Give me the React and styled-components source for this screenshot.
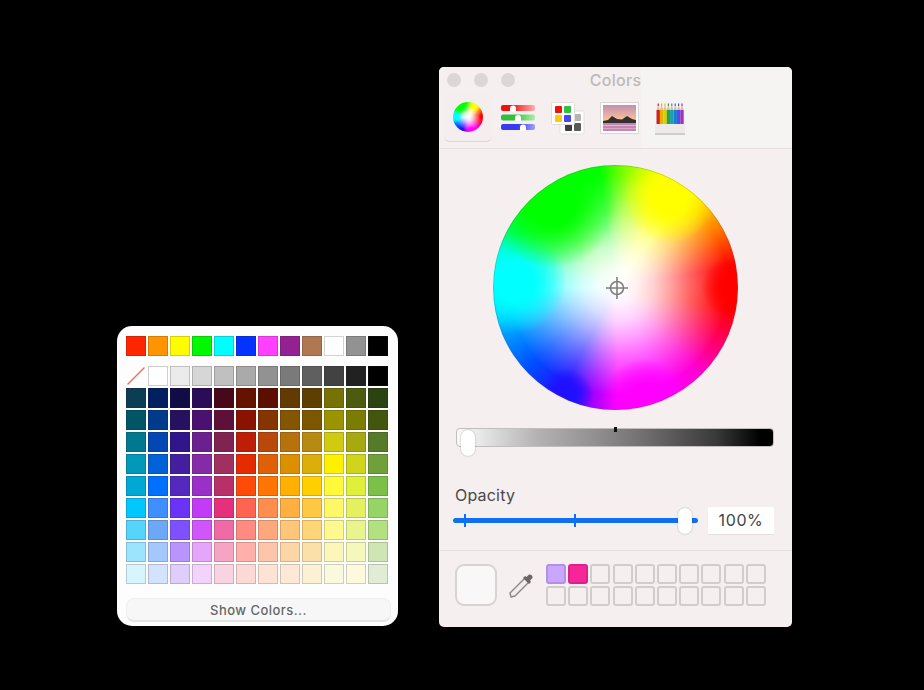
import React from 'react';
import styled, { createGlobalStyle } from 'styled-components';

const Global = createGlobalStyle`
  html, body { margin: 0; padding: 0; background: #000; }
  body { font-family: Inter, "Liberation Sans", sans-serif; }
`;

/* Hue anchors measured clockwise from the right-hand edge of the wheel */
const ANCHORS = [
  [0, '#f00'], [10, '#f00'], [28, '#ff0066'], [45, '#ff00d0'], [62, '#f0f'],
  [88, '#f0f'], [102, '#a000ff'], [117, '#2010ff'], [138, '#0050ff'], [160, '#00a8ff'],
  [180, '#0ff'], [195, '#00ffcc'], [211, '#00ff66'], [232, '#0f0'], [262, '#0f0'],
  [276, '#90ff00'], [296, '#ff0'], [306, '#ff0'], [322, '#ffb000'], [339, '#ff4000'],
  [350, '#f00'], [360, '#f00'],
];
const conic = `conic-gradient(from 90deg, ${ANCHORS.map(([d, c]) => `${c} ${d}deg`).join(', ')})`;

const lobe = (x, y, r, rgb) =>
  `radial-gradient(circle ${r} at ${x}% ${y}%, rgba(${rgb},1) 0, rgba(${rgb},1) 35%, rgba(${rgb},0) 100%)`;

const wheelGradient = ({ $scale = 245 }) => {
  const s = v => `${(v * $scale).toFixed(1)}px`;
  return [
    lobe(24, 15, s(0.27), '0,255,0'),
    lobe(9, 48, s(0.21), '0,255,255'),
    lobe(98, 50, s(0.13), '255,0,0'),
    lobe(72, 13, s(0.19), '255,255,0'),
    lobe(62, 96, s(0.17), '255,0,255'),
    lobe(30, 94, s(0.11), '32,16,255'),
    `radial-gradient(circle closest-side at 51% 49%, rgba(255,255,255,1) 0, rgba(255,255,255,.95) 15%, rgba(255,255,255,.82) 30%, rgba(255,255,255,.62) 45%, rgba(255,255,255,.4) 60%, rgba(255,255,255,.2) 75%, rgba(255,255,255,0) 92%)`,
    conic,
  ].join(', ');
};

const Desktop = styled.div`
  position: relative;
  width: 924px;
  height: 690px;
  background: #000;
  overflow: hidden;
`;

/* ---------- colour grid popover ---------- */
const Popover = styled.div`
  position: absolute;
  left: 117px;
  top: 326px;
  width: 281px;
  height: 300px;
  box-sizing: border-box;
  padding: 10px 8px 0 9px;
  background: #fdfdfd;
  border-radius: 15px;
`;
const SwatchGrid = styled.div`
  display: grid;
  grid-template-columns: repeat(12, 20px);
  grid-auto-rows: 20px;
  gap: 2px;
  margin-bottom: ${p => p.$after || 0}px;
`;
const Swatch = styled.div`
  box-sizing: border-box;
  background: ${p => p.$c};
  border: 1.5px solid rgba(40, 30, 40, ${p => p.$edge || 0.2});
`;
const NoColor = styled.svg`
  width: 20px;
  height: 20px;
  display: block;
`;
const ShowButton = styled.div`
  box-sizing: border-box;
  width: 265px;
  height: 24px;
  margin-top: 14px;
  border: 1px solid #efefef;
  border-bottom: 2px solid #e4e3e3;
  border-radius: 8px;
  background: #f8f7f7;
  color: #666;
  font-size: 13px;
  font-weight: 500;
  letter-spacing: 0.45px;
  line-height: 23px;
  text-align: center;
`;

/* ---------- Colors window ---------- */
const Win = styled.div`
  position: absolute;
  left: 439px;
  top: 67px;
  width: 353px;
  height: 560px;
  background: #f6eff0;
  border-radius: 5px;
  display: flex;
  flex-direction: column;
  overflow: hidden;
`;
const Header = styled.div`
  box-sizing: border-box;
  height: 82px;
  flex: none;
  border-bottom: 1px solid #e6e0e0;
  background: linear-gradient(90deg, #f6eff0 202px, #f6f3f3 202px);
  display: flex;
  flex-direction: column;
`;
const TitleBar = styled.div`
  position: relative;
  height: 26px;
  flex: none;
  display: flex;
  align-items: center;
  gap: 13px;
  padding-left: 8px;
`;
const Light = styled.span`
  width: 14px;
  height: 14px;
  border-radius: 50%;
  background: #dcd6d6;
`;
const Title = styled.span`
  position: absolute;
  left: 0;
  right: 0;
  text-align: center;
  color: #bdb9b9;
  font-size: 16px;
  font-weight: 500;
  letter-spacing: 0.3px;
`;
const Tabs = styled.div`
  display: flex;
  align-items: flex-start;
  padding-left: 5px;
`;
const ActiveTab = styled.div`
  box-sizing: border-box;
  width: 48px;
  height: 49px;
  border-bottom: 1px solid #dbd5d5;
  border-radius: 0 0 6px 6px;
  background: #f5eeef;
  display: flex;
  justify-content: center;
  padding-top: 9px;
`;
const MiniWheel = styled.div`
  width: 30px;
  height: 30px;
  border-radius: 50%;
  background: ${wheelGradient};
`;
const TabIcon = styled.svg`
  display: block;
  flex: none;
  margin-left: ${p => p.$ml}px;
  margin-top: ${p => p.$mt}px;
`;
const Body = styled.div`
  display: flex;
  flex-direction: column;
  padding: 16px 18px 0 17px;
`;
const Wheel = styled.div`
  position: relative;
  width: 245px;
  height: 245px;
  margin-bottom: 1px;
  border-radius: 50%;
  align-self: center;
  background: ${wheelGradient};
  box-shadow: inset 0 0 0 1px rgba(90, 90, 90, .25);
`;
const Crosshair = styled.svg`
  position: absolute;
  left: 112px;
  top: 111px;
`;
const GreySlider = styled.div`
  position: relative;
  box-sizing: border-box;
  height: 19px;
  margin-top: 17px;
  border: 1px solid #c3bebe;
  border-radius: 4px;
  background: linear-gradient(90deg, #fafafa 0, #e6e6e6 8%, #b5b3b3 25%, #8f8d8d 45%, #6a6868 62%, #3a3939 82%, #000 96%);
`;
const Tick = styled.span`
  position: absolute;
  left: 157px;
  top: -2px;
  width: 3px;
  height: 5px;
  background: #111;
`;
const Thumb = styled.span`
  position: absolute;
  left: ${p => p.$x}px;
  top: ${p => p.$y}px;
  width: 14px;
  height: 26px;
  border-radius: 7px;
  background: #fff;
  box-shadow: 0 0 2px rgba(0, 0, 0, .3);
`;
const Label = styled.div`
  margin-top: 38px;
  font-size: 16px;
  line-height: 20px;
  color: #4b4849;
  letter-spacing: 0.2px;
  margin-left: -1px;
`;
const OpacityRow = styled.div`
  display: flex;
  align-items: center;
  height: 27px;
  margin-top: 2px;
  margin-left: -3px;
`;
const BlueTrack = styled.div`
  position: relative;
  width: 245px;
  height: 5px;
  border-radius: 3px;
  background: #0f70f2;
`;
const BlueTick = styled.span`
  position: absolute;
  left: ${p => p.$x}px;
  top: -4px;
  width: 2px;
  height: 13px;
  background: #0f70f2;
`;
const ValueBox = styled.div`
  box-sizing: border-box;
  width: 66px;
  height: 27px;
  margin-left: 10px;
  background: #fff;
  color: #444;
  font-size: 16px;
  line-height: 27px;
  text-align: center;
  letter-spacing: 0.6px;
  box-shadow: 0 1px 0 #e4dede;
`;
const Footer = styled.div`
  margin-top: 16px;
  border-top: 1px solid #e6e0e0;
  padding: 13px 0 0 16px;
  display: flex;
  align-items: flex-start;
`;
const BigWell = styled.div`
  box-sizing: border-box;
  width: 42px;
  height: 42px;
  border: 2px solid #d8d3d3;
  border-radius: 9px;
  background: #f9f7f7;
`;
const Dropper = styled.svg`
  display: block;
  flex: none;
  margin: 8px 0 0 12px;
`;
const Wells = styled.div`
  display: grid;
  grid-template-columns: repeat(10, 20px);
  grid-auto-rows: 20px;
  gap: 2px 2.2px;
  margin-left: 11px;
`;
const Well = styled.div`
  box-sizing: border-box;
  border: 2px solid ${p => p.$edge || '#d2cdcd'};
  border-radius: 3px;
  background: ${p => p.$c || 'transparent'};
`;

const TOP = ['#ff2600','#ff9300','#fffb00','#00f900','#00fdff','#0433ff','#ff40ff','#942192','#b07850','#ffffff','#929292','#000000'];
const GREYS = ['#ffffff','#ebebeb','#d6d6d6','#c0c0c0','#aaaaaa','#929292','#7a7a7a','#5f5f5f','#424242','#212121','#000000'];
const ROWS = [
  ['#0b3d54','#002060','#110b46','#2b0c56','#470818','#661200','#5c0f00','#633b00','#5d3f00','#777204','#4d5b0f','#2b4310'],
  ['#005567','#003a8a','#261160','#4a1170','#5f1038','#8a1300','#853500','#855600','#7d5700','#999400','#7a7d00','#42570d'],
  ['#00788f','#0247b3','#31158a','#6c2090','#812350','#be1e08','#b8480c','#b6720c','#b78a12','#d0ca10','#a8a910','#557a28'],
  ['#0098b8','#0061d8','#431fa0','#852ba8','#a03060','#e52b00','#e06008','#dc9000','#dcae0a','#fff000','#cfd51a','#6fa03a'],
  ['#00a8d6','#0070ff','#5429c0','#9a30c8','#b83068','#ff4a08','#ff7500','#ffb000','#ffcf00','#fff93a','#dff03a','#7cc04a'],
  ['#00c8ff','#3e8fff','#6a33f5','#c23cf5','#e5307e','#ff6452','#ff8d4d','#ffb040','#ffc843','#fff766','#e5f060','#96d565'],
  ['#55d5fb','#6ca8f5','#7e50ff','#d056fa','#f06aa5','#ff8a80','#ffa87e','#ffc67a','#ffd677','#fff990','#e8f58e','#b3e080'],
  ['#9be4fd','#a5c8fc','#b994ff','#e4a5fb','#f6a4c4','#ffb0aa','#ffc5ab','#fdd6a6','#fbe1a8','#fbf7bb','#f5f8bb','#cfe6b4'],
  ['#d7f5fe','#d3e2fd','#dfcdfb','#f3d2fc','#f9d3e0','#fcd9d5','#fde3d4','#fde9d5','#fdf1d4','#fbf9dd','#fdf9dc','#e2ecd4'],
];

const SlidersIcon = () => (
  <TabIcon $ml={8} $mt={11} width="36" height="29" viewBox="0 0 36 29">
    <defs>
      <linearGradient id="sr"><stop offset="0.3" stopColor="#f01010" /><stop offset="1" stopColor="#ffb0b0" /></linearGradient>
      <linearGradient id="sg"><stop offset="0.4" stopColor="#30c040" /><stop offset="1" stopColor="#b0eca8" /></linearGradient>
      <linearGradient id="sb"><stop offset="0.5" stopColor="#3a3af0" /><stop offset="1" stopColor="#a0a0ff" /></linearGradient>
    </defs>
    <rect x="1" y="1" width="34" height="6" rx="2" fill="url(#sr)" />
    <rect x="1" y="10.5" width="34" height="6" rx="2" fill="url(#sg)" />
    <rect x="1" y="20" width="34" height="6" rx="2" fill="url(#sb)" />
    <path d="M13 1.5 a3 3 0 0 1 3 3 v3 h-6 v-3 a3 3 0 0 1 3 -3z" fill="#fff" />
    <path d="M18 11 a3 3 0 0 1 3 3 v3 h-6 v-3 a3 3 0 0 1 3 -3z" fill="#fff" />
    <path d="M23 20.5 a3 3 0 0 1 3 3 v3 h-6 v-3 a3 3 0 0 1 3 -3z" fill="#fff" />
  </TabIcon>
);
const PaletteIcon = () => (
  <TabIcon $ml={15} $mt={9} width="34" height="33" viewBox="0 0 34 33">
    <rect x="9" y="9" width="24" height="23" rx="1" fill="#fff" stroke="#e2dddd" />
    <rect x="22" y="12" width="8" height="7" rx="1" fill="#b5b3b3" />
    <rect x="14" y="22" width="7" height="7" rx="1" fill="#3f3d3e" />
    <rect x="23" y="21" width="7" height="8" rx="1" fill="#5a5859" />
    <rect x="0.5" y="0.5" width="23" height="22" rx="1" fill="#fff" stroke="#e2dddd" />
    <rect x="4" y="4" width="7" height="7" rx="1" fill="#f01008" />
    <rect x="13" y="4" width="7" height="7" rx="1" fill="#30c040" />
    <rect x="4" y="13" width="7" height="7" rx="1" fill="#ffc800" />
    <rect x="13" y="13" width="7" height="7" rx="1" fill="#4848f0" />
  </TabIcon>
);
const PhotoIcon = () => (
  <TabIcon $ml={15} $mt={9} width="39" height="32" viewBox="0 0 39 32">
    <defs>
      <linearGradient id="sky" x1="0" y1="0" x2="0" y2="1">
        <stop offset="0" stopColor="#c090b0" /><stop offset="0.3" stopColor="#e0a8a8" /><stop offset="0.55" stopColor="#f8c090" /><stop offset="1" stopColor="#f4c8a0" />
      </linearGradient>
    </defs>
    <rect x="0.5" y="0.5" width="38" height="31" fill="#fff" stroke="#dcd7d7" />
    <rect x="3" y="3" width="33" height="26" fill="url(#sky)" />
    <path d="M3 19 L8 18 L12 14 L17 17 L22 17.5 L27 14 L32 17 L36 18 V21 H3z" fill="#352e30" />
    <rect x="3" y="21" width="33" height="8" fill="#c088b0" />
    <rect x="3" y="23" width="33" height="1" fill="#e8b8c8" />
    <rect x="3" y="26" width="33" height="1" fill="#e0a8c0" />
  </TabIcon>
);
const PENCILS = ['#d02020','#eab000','#d8d000','#30a040','#14a0a8','#1878e0','#5050d8','#a030c0'];
const PencilsIcon = () => (
  <TabIcon $ml={16} $mt={10} width="30" height="32" viewBox="0 0 30 32">
    {PENCILS.map((c, i) => (
      <g key={c}>
        <path d={`M${1.5 + i * 3.4} 7 l1.7 -5.5 l1.7 5.5 z`} fill="#e0c0a0" />
        <rect x={1.5 + i * 3.4} y="7" width="3.4" height="14" fill={c} />
        <rect x={1.5 + i * 3.4 + 1.1} y="0.5" width="1.2" height="2.5" fill={c} />
      </g>
    ))}
    <rect x="0" y="21" width="30" height="9" fill="#eeeaea" />
    <rect x="0" y="30" width="30" height="2" fill="#d2cdcd" />
  </TabIcon>
);

export default function App() {
  return (
    <Desktop>
      <Global />
      <Popover>
        <SwatchGrid $after={10}>
          {TOP.map((c, i) => <Swatch key={i} $c={c} />)}
        </SwatchGrid>
        <SwatchGrid>
          <NoColor viewBox="0 0 20 20">
            <line x1="1.5" y1="18.5" x2="18.5" y2="1.5" stroke="#e4735f" strokeWidth="1.5" />
          </NoColor>
          {GREYS.map((c, i) => <Swatch key={i} $c={c} $edge={0.22} />)}
          {ROWS.flat().map((c, i) => <Swatch key={i} $c={c} />)}
        </SwatchGrid>
        <ShowButton>Show Colors...</ShowButton>
      </Popover>

      <Win>
        <Header>
          <TitleBar>
            <Light /><Light /><Light />
            <Title>Colors</Title>
          </TitleBar>
          <Tabs>
            <ActiveTab><MiniWheel $scale={30} /></ActiveTab>
            <SlidersIcon />
            <PaletteIcon />
            <PhotoIcon />
            <PencilsIcon />
          </Tabs>
        </Header>
        <Body>
          <Wheel $scale={245}>
            <Crosshair width="24" height="24" viewBox="0 0 24 24" fill="none" stroke="#7f7f7f" strokeWidth="1.6">
              <circle cx="12" cy="12" r="6.5" />
              <path d="M12 1v22M1 12h22" />
            </Crosshair>
          </Wheel>
          <GreySlider>
            <Tick />
            <Thumb $x={4} $y={1} />
          </GreySlider>
          <Label>Opacity</Label>
          <OpacityRow>
            <BlueTrack>
              <BlueTick $x={11} />
              <BlueTick $x={121} />
              <Thumb $x={225} $y={-10} />
            </BlueTrack>
            <ValueBox>100%</ValueBox>
          </OpacityRow>
        </Body>
        <Footer>
          <BigWell />
          <Dropper width="26" height="26" viewBox="0 0 26 26">
            <path d="M16 6 L20 10 L6 24 L2 25 L1 21 Z" fill="#f1eced" stroke="#8a8788" strokeWidth="1.4" strokeLinejoin="round" />
            <path d="M14 6 L20 12 L22 10 L21 8.5 L23.5 6 A3 3 0 0 0 20 2.5 L17.5 5 L16 4 Z" fill="#6a6768" />
          </Dropper>
          <Wells>
            <Well $c="#c9a6ff" $edge="#b48fe8" />
            <Well $c="#f5259a" $edge="#e01f8a" />
            {Array.from({ length: 18 }, (_, i) => <Well key={i} />)}
          </Wells>
        </Footer>
      </Win>
    </Desktop>
  );
}
